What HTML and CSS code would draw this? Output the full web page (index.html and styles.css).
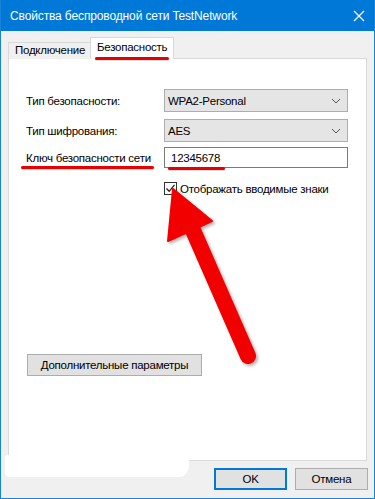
FILE: index.html
```html
<!DOCTYPE html>
<html lang="ru">
<head>
<meta charset="utf-8">
<title>Свойства беспроводной сети TestNetwork</title>
<link rel="stylesheet" href="styles.css">
</head>
<body>
<div class="window">
  <div class="titlebar">
    <span class="title">Свойства беспроводной сети TestNetwork</span>
    <svg class="close" width="12" height="12" viewBox="0 0 12 12"><path d="M1 1L11 11M11 1L1 11" stroke="#fff" stroke-width="1.2" fill="none"/></svg>
  </div>
  <div class="client">
    <div class="tabs">
      <div class="tab">Подключение</div>
      <div class="tab active"><span class="mark mark-tab">Безопасность</span></div>
    </div>
    <div class="panel">
      <div class="form">
        <div class="row r1">
          <div class="label">Тип безопасности:</div>
          <div class="select"><span>WPA2-Personal</span><svg width="10" height="6" viewBox="0 0 10 6"><path d="M1 1L5 5L9 1" stroke="#555" stroke-width="1" fill="none"/></svg></div>
        </div>
        <div class="row r2">
          <div class="label">Тип шифрования:</div>
          <div class="select"><span>AES</span><svg width="10" height="6" viewBox="0 0 10 6"><path d="M1 1L5 5L9 1" stroke="#555" stroke-width="1" fill="none"/></svg></div>
        </div>
        <div class="row r3">
          <div class="label"><span class="mark mark-label">Ключ безопасности сети</span></div>
          <div class="input"><span class="mark mark-value">12345678</span></div>
        </div>
        <div class="row r4">
          <div class="label"></div>
          <div class="check">
            <span class="box"><svg width="11" height="11" viewBox="0 0 11 11"><path d="M1.5 5.5L4.2 8.3L9.5 1.8" stroke="#222" stroke-width="1.3" fill="none"/></svg></span>
            <span>Отображать вводимые знаки</span>
          </div>
        </div>
      </div>
      <div class="adv-row"><button class="btn adv">Дополнительные параметры</button></div>
    </div>
    <div class="footer">
      <button class="btn ok">OK</button>
      <button class="btn">Отмена</button>
    </div>
  </div>
  <div class="smudge"></div>
  <svg class="arrow" width="375" height="499" viewBox="0 0 375 499">
    <g fill="#f20000" stroke="#f20000">
      <line x1="191" y1="228" x2="247" y2="356" stroke-width="16" stroke-linecap="round"/>
      <polygon points="172,189 167,241 211,221" stroke-width="2" stroke-linejoin="round"/>
    </g>
  </svg>
</div>
</body>
</html>
```
FILE: styles.css
```css
* { box-sizing: border-box; }
html, body { margin: 0; padding: 0; background: #fff; }
body { font-family: "Liberation Sans", Arial, sans-serif; font-size: 11.5px; letter-spacing: -0.25px; color: #000; }

.window {
  position: relative;
  width: 375px;
  height: 499px;
  display: flex;
  flex-direction: column;
  border: 1px solid #1883d7;
  border-top: none;
  background: #f0f0f0;
  overflow: hidden;
}

.titlebar {
  height: 31px;
  flex: none;
  background: #0078d7;
  display: flex;
  align-items: center;
  justify-content: space-between;
  padding: 0 10px;
  margin: 0 -1px;
  color: #fff;
}
.title { font-size: 12px; letter-spacing: -0.13px; white-space: nowrap; }

.client {
  flex: 1;
  display: flex;
  flex-direction: column;
  padding: 6px 6px 0 7px;
}

.tabs {
  display: flex;
  align-items: flex-end;
  height: 22px;
  margin-bottom: -1px;
  position: relative;
  z-index: 1;
}
.tab {
  height: 17px;
  border: 1px solid #d9d9d9;
  border-bottom: none;
  background: #f0f0f0;
  display: flex;
  align-items: center;
  line-height: 1;
  white-space: nowrap;
}
.tab:first-child { border-right: none; width: 82px; padding-left: 6px; }
.tab.active {
  height: 22px;
  width: 84px;
  background: #fff;
  padding: 4px 0 0 6px;
  align-items: flex-start;
}

.mark { position: relative; }
.mark::after {
  content: "";
  position: absolute;
  height: 3px;
  background: #e60000;
  border-radius: 2px;
  box-shadow: 0 1px 1px rgba(0,0,0,0.15);
}
.mark-tab::after { left: -2px; right: -2px; bottom: -6px; }
.mark-label::after { left: -5px; right: -3px; bottom: -5px; }
.mark-value::after { left: -3px; right: -5px; bottom: -6px; }

.panel {
  height: 403px;
  flex: none;
  background: #fff;
  border: 1px solid #d9d9d9;
  width: 359px;
  display: flex;
  flex-direction: column;
  justify-content: space-between;
  padding: 30px 0 84px 17px;
}

.form { display: flex; flex-direction: column; }
.row { display: flex; align-items: center; }
.r1 { height: 23px; margin-bottom: 7px; }
.r2 { height: 23px; margin-bottom: 5px; }
.r3 { height: 21px; margin-bottom: 14px; }
.r4 { height: 13px; }

.label { width: 138px; flex: none; white-space: nowrap; }
.select {
  width: 184px;
  height: 23px;
  background: #e5e5e5;
  border: 1px solid #adadad;
  display: flex;
  align-items: center;
  justify-content: space-between;
  padding: 0 6px 0 3px;
}
.input {
  width: 184px;
  height: 21px;
  background: #fff;
  border: 1px solid #7a7a7a;
  display: flex;
  align-items: center;
  padding: 0 4px 0 6px;
}

.check {
  display: flex;
  align-items: center;
  gap: 3px;
  white-space: nowrap;
}
.box {
  flex: none;
  width: 13px;
  height: 13px;
  border: 1px solid #333;
  background: #fff;
  display: flex;
  align-items: center;
  justify-content: center;
}

.adv-row { display: flex; padding-left: 1px; }
.btn {
  font-family: inherit;
  font-size: 11.5px;
  letter-spacing: -0.25px;
  background: #e1e1e1;
  border: 1px solid #adadad;
  color: #000;
  height: 22px;
  padding: 0;
  margin: 0;
}
.adv { width: 175px; }

.footer {
  display: flex;
  justify-content: flex-end;
  gap: 8px;
  padding-top: 7px;
}
.footer .btn { width: 73px; }
.btn.ok { border: 2px solid #0078d7; }

.smudge {
  position: absolute;
  left: 4px;
  top: 455px;
  width: 184px;
  height: 22px;
  background: #fff;
  border-radius: 3px 4px 10px 3px / 3px 4px 12px 6px;
}

.arrow {
  position: absolute;
  left: 0;
  top: 0;
  pointer-events: none;
  filter: drop-shadow(2px 2px 1.5px rgba(0,0,0,0.3));
}
```
